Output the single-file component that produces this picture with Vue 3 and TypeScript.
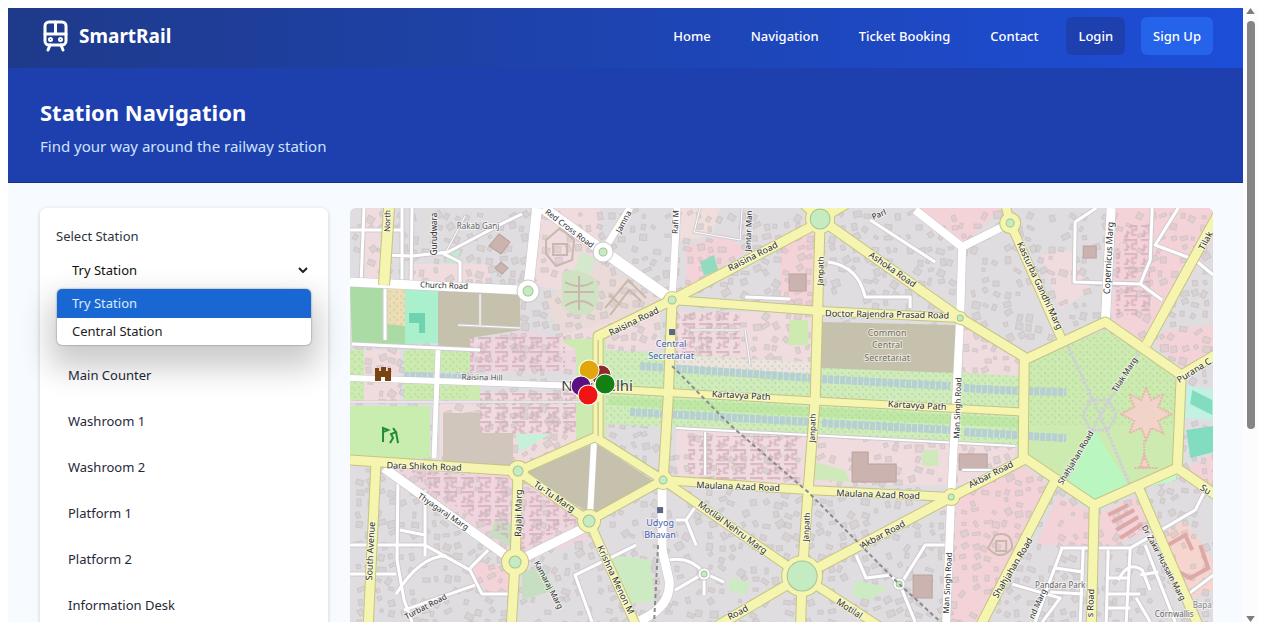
<script setup lang="ts">
import { ref } from 'vue'

interface Shape { d: string; fill: string }
interface Road { d: string; w: number }
interface Label { t: string; x: number; y: number; r: number; s?: number; c?: string }
interface Block { x: number; y: number; w: number; h: number; r: number }

const links = ['Home', 'Navigation', 'Ticket Booking', 'Contact']
const stations = ['Try Station', 'Central Station']
const station = ref('Try Station')
const places = ['Main Counter', 'Washroom 1', 'Washroom 2', 'Platform 1', 'Platform 2', 'Information Desk']

const pink = '#f0dcdf'
const rose = '#f4d3d8'
const grass = '#cdebb0'
const park = '#c5f7c9'
const khaki = '#c6c1ac'

const districts: Shape[] = [
  { d: 'M365 208H380V285H365ZM412 264H490V282H412ZM535 208H600L598 250L560 290L535 285Z', fill: pink },
  { d: 'M440 340H600V372H440ZM440 392H580V470H440ZM350 350H400V404H350Z', fill: pink },
  { d: 'M470 345L520 330L600 345V372H470Z', fill: '#eed6df' },
  { d: 'M600 262L660 300L605 330L560 335L545 300Z', fill: '#eadbd9' },
  { d: 'M686 246L728 234L745 252L686 288Z', fill: rose },
  { d: 'M680 208H720L712 236L680 240Z', fill: '#efdedc' },
  { d: 'M676 312H812V362H676ZM560 335L660 308V350H606L560 350Z', fill: pink },
  { d: 'M780 240L815 230V305H780Z', fill: rose },
  { d: 'M920 208H1002L962 245Z', fill: rose },
  { d: 'M1116 208H1213V240L1148 345L1112 322Z', fill: rose },
  { d: 'M1156 345L1165 330L1213 325V350L1182 368Z', fill: rose },
  { d: 'M1040 255L1070 250L1090 290L1060 310Z', fill: pink },
  { d: 'M962 325L1020 358V385H962ZM676 430H1015V485H676Z', fill: pink },
  { d: 'M412 468L590 478V540L518 560L390 470Z', fill: '#efd6de' },
  { d: 'M478 560L512 570V594H490L472 575Z', fill: rose },
  { d: 'M957 500L1020 464L1052 488L982 622H950Z', fill: rose },
  { d: 'M1058 496L1090 512V545H1036ZM1100 514L1134 496L1155 530L1100 550Z', fill: rose },
  { d: 'M1160 535L1185 520L1213 560V590L1185 600Z', fill: '#f6d5cf' },
  { d: 'M1182 470L1213 455V490Z', fill: rose },
]

const greens: Shape[] = [
  { d: 'M350 285L405 288V345L352 343Z', fill: '#aadba4' },
  { d: 'M405 289L438 291V343L405 344Z', fill: '#aaf0cc' },
  { d: 'M387 288L405 289V326L385 324Z', fill: '#efdcb4' },
  { d: 'M438 291L520 294V330L470 338V350H438Z', fill: khaki },
  { d: 'M350 350H364V400H350ZM404 350H470V372H404ZM404 383H480V400H404Z', fill: grass },
  { d: 'M350 406H430V458H350Z', fill: '#c9edae' },
  { d: 'M443 413H480V433H513V466H443Z', fill: '#d0c6bc' },
  { d: 'M515 434H550L520 452Z', fill: '#c6f0d8' },
  { d: 'M560 340L606 338L606 455L576 440L576 350Z', fill: grass },
  { d: 'M606 350L1020 376V446L606 424Z', fill: '#cfecba' },
  { d: 'M608 396L1020 418V428L608 405Z', fill: '#bfe8a4' },
  { d: 'M676 356L812 362V374L676 366Z', fill: '#eee3e0' },
  { d: 'M821 322L955 325V373L821 368Z', fill: khaki },
  { d: 'M595 443L655 482L594 516L525 473Z', fill: khaki },
  { d: 'M1105 330L1176 377L1174 466L1094 500L1026 455L1028 362Z', fill: grass },
  { d: 'M1095 431L1130 488L1094 502L1066 484Z', fill: '#baf7c0' },
  { d: 'M1130 488L1176 466V480L1136 490Z', fill: park },
  { d: 'M1183 385L1213 390V420L1183 418Z', fill: '#c2f0e2' },
  { d: 'M1192 390L1212 400V415L1190 404ZM1186 430L1213 426V452L1190 458Z', fill: '#82ddc0' },
  { d: 'M562 272Q580 266 596 280Q604 300 590 314Q572 318 562 306Z', fill: '#cfe3c2' },
  { d: 'M580 252L596 258L590 274L574 270Z', fill: '#d4e8cc' },
  { d: 'M700 262L714 255L718 270L704 276Z', fill: '#93dbbe' },
  { d: 'M790 320H808V345H788Z', fill: grass },
  { d: 'M815 462L845 470L850 482L815 480ZM922 450H938V466H922Z', fill: '#cfe9bb' },
  { d: 'M855 580L888 588L870 600L852 596ZM610 555L650 560L655 600L625 605ZM730 578L750 582L745 595L728 590Z', fill: '#cdebc2' },
  { d: 'M495 520L512 524V548L490 535ZM522 570H545L555 590L522 600Z', fill: '#c7dec2' },
  { d: 'M448 254L460 250L456 264L446 262Z', fill: '#c2ead2' },
]

const waters: Road[] = [
  { d: 'M404 376L470 379', w: 9 },
  { d: 'M640 366L812 378M822 379L950 386M964 388L1020 391M1028 391L1066 392', w: 8 },
  { d: 'M630 412L812 422M822 423L950 430M964 432L1018 435M1028 436L1066 438', w: 8 },
]

const minorRoads: Road[] = [
  { d: 'M364 208L361 284M402 208V284M412 208L411 284M350 230H402M384 255L412 256L448 252L505 222L522 214M440 252L460 262V284M385 288V340M352 344L480 350', w: 4 },
  { d: 'M480 294V325M458 325L520 328M465 216L445 254M350 402H580', w: 2 },
  { d: 'M700 208L694 232L740 240L742 208M745 330L750 365M690 330H740', w: 2 },
  { d: 'M870 220L935 262M828 262Q858 266 865 297H910V308M745 297L790 299', w: 4 },
  { d: 'M1096 208L1075 222L1074 282L1140 284L1162 300M1152 208L1150 260L1140 284M1178 208L1155 245L1195 260L1213 275', w: 4 },
  { d: 'M398 474L397 560L404 600L412 622M425 490V556M350 545H425L470 570L482 594H512M350 574H396M396 594Q420 556 446 556M425 535L400 530M404 610L475 585M488 550L470 568', w: 4 },
  { d: 'M636 545L575 575L592 622M676 520L686 520L696 545M686 520L700 500M668 560Q690 556 704 573M704 573L675 590M704 573V595M704 573L724 582', w: 4 },
  { d: 'M950 545H925L900 585L915 622M900 585L890 575L866 578L856 555', w: 4 },
  { d: 'M1060 548H1130L1195 510L1205 490M1062 548L1050 580L1035 622M1083 548L1080 622M1012 584L1060 598L1042 622M1055 568L1083 572M1050 592L1083 594M1108 550L1106 622M1145 545L1175 622M1130 548L1126 622M1106 578H1128M1106 594H1140M1118 580Q1128 560 1142 570L1150 590M1140 575L1158 572M1106 608H1130M1180 600L1213 575M1136 598L1150 622', w: 4 },
  { d: 'M676 428L1015 446M962 470H1015M705 432V475', w: 3 },
]

const whiteRoads: Road[] = [
  { d: 'M350 282L520 290', w: 9 },
  { d: 'M537 208L528 291', w: 10 },
  { d: 'M543 208L603 251L672 300', w: 11 },
  { d: 'M603 251L630 208M677 208L672 300', w: 7 },
  { d: 'M915 210L962 247L1010 223M962 247L960 318L951 497L946 622', w: 8 },
  { d: 'M1111 208L1105 325', w: 9 },
  { d: 'M350 378L580 386', w: 6 },
  { d: 'M384 468L515 562L592 524', w: 9 },
  { d: 'M594 440L590 515', w: 6 },
  { d: 'M662 485V550L669 580Q672 608 636 622', w: 9 },
  { d: 'M438 350L434 458', w: 5 },
]

const mainRoads: Road[] = [
  { d: 'M389 208L384 285', w: 10 },
  { d: 'M598 440V336L672 300L820 222', w: 9 },
  { d: 'M672 300L820 311L960 318', w: 8 },
  { d: 'M672 300L668 400L663 480', w: 9 },
  { d: 'M804 204L820 219L960 318L1024 357', w: 9 },
  { d: 'M820 219L815 400L808 490L802 576L800 640M820 219L846 204', w: 9 },
  { d: 'M608 389L815 401L1022 412', w: 7 },
  { d: 'M1005 204L1010 223L1064 345', w: 8 },
  { d: 'M1024 360L1105 322L1181 375L1177 468L1094 505L1023 457Z', w: 9 },
  { d: 'M1146 345L1220 210M1181 375L1220 352M1177 468L1220 498', w: 9 },
  { d: 'M1023 460L951 497L802 576L710 630', w: 9 },
  { d: 'M1054 482L978 630M1094 508L1091 630M1138 487L1200 630', w: 9 },
  { d: 'M350 460L518 471M376 462L368 630', w: 9 },
  { d: 'M518 471L515 562L511 630', w: 9 },
  { d: 'M518 471L595 437L663 480L589 521Z', w: 8 },
  { d: 'M589 521L638 630', w: 8 },
  { d: 'M663 480L808 490L951 497', w: 8 },
  { d: 'M663 480L802 576L885 630', w: 8 },
]

const circles = [
  { x: 672, y: 300, r: 8, g: 4 }, { x: 820, y: 219, r: 14, g: 10 }, { x: 1010, y: 223, r: 10, g: 4 },
  { x: 960, y: 318, r: 6, g: 3 }, { x: 518, y: 471, r: 10, g: 5 }, { x: 515, y: 562, r: 13, g: 6 },
  { x: 589, y: 521, r: 11, g: 6 }, { x: 663, y: 480, r: 9, g: 4 }, { x: 802, y: 576, r: 20, g: 15 },
  { x: 951, y: 497, r: 8, g: 3 },
]
const whiteCircles = [
  { x: 528, y: 291, r: 11, g: 5 }, { x: 603, y: 252, r: 10, g: 4 }, { x: 704, y: 574, r: 6, g: 3 }, { x: 899, y: 584, r: 6, g: 3 },
]

const labels: Label[] = [
  { t: 'North', x: 388, y: 221, r: -89 }, { t: 'Gurudwara', x: 435, y: 234, r: -90 },
  { t: 'Rakab Ganj', x: 478, y: 227, r: 0, c: '#666' }, { t: 'Church Road', x: 444, y: 286, r: 2 },
  { t: 'Red Cross Road', x: 569, y: 229, r: 37 }, { t: 'Jamna', x: 624, y: 222, r: -62 },
  { t: 'Rafi M', x: 676, y: 222, r: -88 }, { t: 'Jantar Man', x: 749, y: 231, r: -88 },
  { t: 'Raisina Road', x: 753, y: 257, r: -27, s: 9 }, { t: 'Raisina Road', x: 634, y: 322, r: -26, s: 9 },
  { t: 'Raisina Hill', x: 482, y: 378, r: 1, c: '#555' }, { t: 'Janpath', x: 821, y: 271, r: -88 },
  { t: 'Ashoka Road', x: 892, y: 270, r: 35, s: 9 }, { t: 'Parl', x: 879, y: 215, r: -22 },
  { t: 'Doctor Rajendra Prasad Road', x: 887, y: 315, r: 1, s: 9 },
  { t: 'Kasturba Gandhi Marg', x: 1039, y: 286, r: 65, s: 9 }, { t: 'Copernicus Marg', x: 1109, y: 258, r: -87, s: 9 },
  { t: 'Tilak', x: 1206, y: 241, r: -62, s: 9 }, { t: 'Purana C', x: 1194, y: 371, r: -32, s: 9 },
  { t: 'Tilak Marg', x: 1125, y: 375, r: -57 }, { t: 'Kartavya Path', x: 741, y: 396, r: 3, s: 9 },
  { t: 'Kartavya Path', x: 917, y: 406, r: 3, s: 9 }, { t: 'Man Singh Road', x: 958, y: 408, r: -88 },
  { t: 'Janpath', x: 813, y: 428, r: -88 }, { t: 'Shahjahan Road', x: 1076, y: 458, r: -59 },
  { t: 'Dara Shikoh Road', x: 424, y: 467, r: 2, s: 9 }, { t: 'Thyagaraj Marg', x: 443, y: 512, r: 34 },
  { t: 'Tu-Tu Marg', x: 554, y: 497, r: 34, s: 9 }, { t: 'Rajaji Marg', x: 519, y: 513, r: -89, s: 9 },
  { t: 'South Avenue', x: 371, y: 551, r: -87, s: 9 }, { t: 'Turbat Road', x: 426, y: 607, r: -27 },
  { t: 'Krishna Menon M', x: 615, y: 580, r: 65, s: 9 }, { t: 'Kamaraj Marg', x: 548, y: 585, r: 62 },
  { t: 'Maulana Azad Road', x: 738, y: 487, r: 2, s: 9 }, { t: 'Maulana Azad Road', x: 878, y: 495, r: 2, s: 9 },
  { t: 'Motilal Nehru Marg', x: 732, y: 528, r: 36, s: 9 }, { t: 'Akbar Road', x: 883, y: 535, r: -28, s: 9 },
  { t: 'Akbar Road', x: 991, y: 475, r: -27, s: 9 }, { t: 'Janpath', x: 807, y: 527, r: -87 },
  { t: 'Man Singh Road', x: 948, y: 583, r: -87 }, { t: 'Shahjahan Road', x: 1013, y: 568, r: -59, s: 9 },
  { t: 'Dr Zakir Hussain Marg', x: 1163, y: 563, r: 62 }, { t: 'Road', x: 738, y: 613, r: -28, s: 9 },
  { t: 'Motilal', x: 849, y: 609, r: 33, s: 9 }, { t: 's Road', x: 1091, y: 603, r: -88, s: 9 },
  { t: 'Pandara Park', x: 1060, y: 586, r: 0, c: '#666' }, { t: 'Cornwallis', x: 1174, y: 615, r: 0, c: '#666' },
  { t: 'nd Marg', x: 1038, y: 604, r: -65 }, { t: 'Bapa', x: 1202, y: 606, r: 0, c: '#888' }, { t: 'Su', x: 1205, y: 490, r: 32, s: 9 },
  { t: 'Common', x: 887, y: 334, r: 0, s: 9, c: '#77725f' }, { t: 'Central', x: 887, y: 346, r: 0, s: 9, c: '#77725f' },
  { t: 'Secretariat', x: 887, y: 359, r: 0, s: 9, c: '#77725f' },
  { t: 'Central', x: 671, y: 345, r: 0, s: 9, c: '#4560b0' }, { t: 'Secretariat', x: 671, y: 357, r: 0, s: 9, c: '#4560b0' },
  { t: 'Udyog', x: 660, y: 524, r: 0, s: 9, c: '#4560b0' }, { t: 'Bhavan', x: 660, y: 536, r: 0, s: 9, c: '#4560b0' },
]

const pins = [
  { x: 601, y: 375, c: '#8f2a2a' }, { x: 589, y: 370, c: '#e0a60c' }, { x: 581, y: 386, c: '#5b1080' },
  { x: 605, y: 384, c: '#128012' }, { x: 588, y: 395, c: '#f01414' },
]

// Small building footprints scattered with a repeatable generator.
function footprints(): Block[] {
  let seed = 41
  const rnd = () => (seed = (seed * 16807) % 2147483647) / 2147483647
  const out: Block[] = []
  for (let y = 212; y < 636; y += 11) {
    for (let x = 354; x < 1213; x += 11) {
      if (rnd() < 0.3) continue
      out.push({
        x: Math.round(x + rnd() * 4), y: Math.round(y + rnd() * 4),
        w: Math.round(3 + rnd() * 5), h: Math.round(3 + rnd() * 4), r: Math.round(rnd() * 70 - 35),
      })
    }
  }
  return out
}
const blocks = footprints()
</script>

<template>
  <div class="frame">
    <div class="page">
      <header class="topbar">
        <a class="brand" href="#">
          <svg class="brand-icon" viewBox="0 0 26 32" aria-hidden="true">
            <rect x="2" y="2" width="21" height="23" rx="4" />
            <path d="M2 14H23M12.500 2V14M7 25L5 30M18 25L20 30" />
            <circle cx="7.500" cy="19.500" r="1" /><circle cx="17.500" cy="19.500" r="1" />
          </svg>
          <span>SmartRail</span>
        </a>
        <nav class="nav">
          <a v-for="l in links" :key="l" href="#">{{ l }}</a>
          <a class="login" href="#">Login</a>
          <a class="signup" href="#">Sign Up</a>
        </nav>
      </header>

      <section class="hero">
        <h1>Station Navigation</h1>
        <p>Find your way around the railway station</p>
      </section>

      <main class="content">
        <aside class="card">
          <label for="station">Select Station</label>
          <div class="picker">
            <select id="station" v-model="station">
              <option v-for="s in stations" :key="s">{{ s }}</option>
            </select>
            <svg class="chevron" viewBox="0 0 10 6" aria-hidden="true"><path d="M1 1L5 5L9 1" /></svg>
            <ul class="options" role="listbox" aria-label="Stations">
              <li v-for="s in stations" :key="s" role="option" :aria-selected="s === station" :class="{ active: s === station }" @click="station = s">{{ s }}</li>
            </ul>
          </div>
          <div class="places">
            <button v-for="p in places" :key="p" type="button">{{ p }}</button>
          </div>
        </aside>

        <div class="map">
          <svg viewBox="350 208 863 422" role="img" aria-label="Map of New Delhi">
            <defs>
              <pattern id="trees" width="7" height="7" patternUnits="userSpaceOnUse">
                <circle cx="2" cy="2" r="1" /><circle cx="5" cy="5" r="1" />
              </pattern>
              <pattern id="plots" width="17" height="14" patternUnits="userSpaceOnUse">
                <path d="M2 2H14V6H10V11H14M5 6V12H2M6 9H8" />
              </pattern>
            </defs>
            <rect class="ground" x="350" y="208" width="863" height="430" />
            <path v-for="(s, i) in districts" :key="'d' + i" :d="s.d" :fill="s.fill" />
            <rect v-for="(b, i) in blocks" :key="'b' + i" class="block" :x="b.x" :y="b.y" :width="b.w" :height="b.h" :transform="`rotate(${b.r} ${b.x} ${b.y})`" />
            <path v-for="(s, i) in greens" :key="'g' + i" :d="s.d" :fill="s.fill" />
            <path class="plots" d="M470 336H565V371H470ZM480 393H576V434H480ZM410 470L510 478V540L430 490ZM676 312H740V356H676ZM688 436H800V480H688ZM1130 225H1150V315H1116V250ZM525 485L580 520L520 550Z" />
            <path class="trees" d="M350 350H364V400H350ZM404 350H470V400H404ZM606 350L1020 376V446L606 424ZM1105 330L1176 377L1174 425L1026 425L1028 362ZM385 290H405V325H385Z" />
            <path v-for="(r, i) in waters" :key="'w' + i" class="water" :d="r.d" :stroke-width="r.w" />

            <path class="drive" d="M1067 345L1100 415L1066 480M1140 350L1100 415L1131 488M1090 400H1108L1116 415L1108 430H1090L1083 415Z" />
            <path class="garden" d="M1146 388L1151 400L1163 394L1158 407L1171 414L1158 421L1163 433L1151 428L1146 440L1141 428L1129 433L1134 421L1121 414L1134 407L1129 394L1141 400Z" />
            <path class="garden" d="M1144 440V460M1134 468H1158M1140 467L1144 454L1149 467Z" />
            <path class="pool" d="M409 313H425V333H419V323H409Z" />
            <path class="ornament" d="M605 308L628 280L646 298M610 315L629 290L641 301M610 295L620 305M564 292H594M579 276V310M565 282Q580 290 593 282M565 306Q580 296 593 306" />
            <path class="ornament" d="M546 240L560 228L574 240L572 260L556 266L546 254ZM553 244H567V255H553ZM995 535Q1012 530 1012 548Q1000 562 988 548ZM996 541H1006V551H996Z" />
            <path class="building" d="M499 234L510 242L501 254L489 246ZM501 262L508 268L502 274L495 268ZM852 452H868V464H896V482H852ZM959 454H987V470H959ZM1083 246H1096V258H1083ZM789 274H806V291H789ZM913 575H932V598H913Z" />
            <path class="brick" d="M1108 515L1128 505M1112 522L1134 510M1116 530L1138 517M1120 538L1142 524M1168 545L1185 535L1192 550M1175 570L1190 578L1208 568L1200 545" />

            <path v-for="(r, i) in minorRoads" :key="'mc' + i" class="minor-case" :d="r.d" :stroke-width="r.w + 1" />
            <path v-for="(r, i) in minorRoads" :key="'m' + i" class="minor" :d="r.d" :stroke-width="r.w - 1" />
            <path v-for="(r, i) in whiteRoads" :key="'wc' + i" class="white-case" :d="r.d" :stroke-width="r.w + 1" />
            <path v-for="(r, i) in whiteRoads" :key="'wr' + i" class="minor" :d="r.d" :stroke-width="r.w" />
            <path v-for="(r, i) in mainRoads" :key="'yc' + i" class="main-case" :d="r.d" :stroke-width="r.w + 2" />
            <circle v-for="(c, i) in circles" :key="'cc' + i" class="main-ring" :cx="c.x" :cy="c.y" :r="c.r + 1" />
            <path v-for="(r, i) in mainRoads" :key="'y' + i" class="main-fill" :d="r.d" :stroke-width="r.w" />
            <path class="median" d="M598 340V366M598 402V436" />
            <circle v-for="(c, i) in circles" :key="'c' + i" class="main-disc" :cx="c.x" :cy="c.y" :r="c.r" />
            <circle v-for="(c, i) in circles" :key="'ci' + i" class="isle" :cx="c.x" :cy="c.y" :r="c.g" />
            <circle v-for="(c, i) in whiteCircles" :key="'k' + i" class="white-disc" :cx="c.x" :cy="c.y" :r="c.r" />
            <circle v-for="(c, i) in whiteCircles" :key="'ki' + i" class="isle" :cx="c.x" :cy="c.y" :r="c.g" />
            <path class="rail" d="M672 366L730 425L808 492L899 584L945 626M658 545L654 622" />

            <path class="palace" d="M375 368H379V371H381V367H386V371H388V368H391V381H385V377H381V381H375Z" />
            <path class="golf" d="M383 442V428L388 430L383 432M393 428L396 432L391 434L393 438L390 443M396 432L398 443" />
            <rect class="metro" x="669" y="329" width="6" height="6" /><rect class="metro" x="657" y="507" width="6" height="6" />

            <text v-for="(l, i) in labels" :key="'t' + i" :x="l.x" :y="l.y" :font-size="l.s ?? 8" :fill="l.c ?? '#2b2b2b'" :transform="`rotate(${l.r} ${l.x} ${l.y})`">{{ l.t }}</text>
            <text class="city" x="597" y="387">New Delhi</text>
            <circle v-for="p in pins" :key="p.c" class="pin" :cx="p.x" :cy="p.y" r="10" :fill="p.c" />
          </svg>
        </div>
      </main>
    </div>

    <div class="scrollbar" aria-hidden="true">
      <svg viewBox="0 0 10 7"><path d="M5 0L10 7H0Z" /></svg>
      <div class="track"><div class="thumb"></div></div>
      <svg viewBox="0 0 10 7"><path d="M0 0H10L5 7Z" /></svg>
    </div>
  </div>
</template>

<style>
body { background: #fff; }
</style>

<style scoped>
* { box-sizing: border-box; }
.frame {
  display: flex;
  height: 100vh;
  padding: 8px 17px 17px 8px;
  font-family: "Noto Sans", "Open Sans", sans-serif;
  font-size: 13px;
  color: #2d3440;
}
.page { flex: 1; min-width: 0; overflow: hidden; background: #f7fbff; }
.topbar {
  display: flex;
  align-items: center;
  justify-content: space-between;
  height: 60px;
  padding: 0 30px 4px 32px;
  background: linear-gradient(90deg, #1e3a8a, #1d4ed8);
}
.brand { display: flex; align-items: center; gap: 10px; color: #fff; font-size: 19px; font-weight: 700; text-decoration: none; }
.brand-icon { width: 29px; height: 34px; padding-left: 3px; fill: none; stroke: #fff; stroke-width: 3; stroke-linecap: round; }
.nav { display: flex; gap: 16px; }
.nav a { padding: 0 12px; border-radius: 6px; color: #fff; font-weight: 500; line-height: 38px; text-decoration: none; }
.nav .login { background: #1e40af; }
.nav .signup { background: #2563eb; }
.hero { height: 115px; padding: 28px 32px 24px; background: #1e40af; border-bottom: 1px solid #1c3478; color: #fff; }
.hero h1 { margin: 0 0 6px; font-size: 22px; line-height: 32px; }
.hero p { margin: 0; color: #cfe2ff; font-size: 15px; line-height: 24px; }
.content { display: grid; grid-template-columns: 1fr 3fr; gap: 22px; padding: 25px 30px 0 32px; }
.card { padding: 18px 16px; border-radius: 6px; background: #fff; box-shadow: 0 1px 4px rgba(0, 0, 0, .18); }
.card label { display: block; line-height: 20px; }
.picker { position: relative; margin-top: 8px; }
.picker select { display: block; width: 100%; height: 32px; padding: 0 16px; border: 0; border-radius: 4px; background: #fff; color: #111; font: inherit; appearance: none; outline: none; }
.chevron { position: absolute; top: 13px; right: 4px; width: 10px; height: 6px; fill: none; stroke: #222; stroke-width: 2; }
.options { position: absolute; z-index: 2; top: 35px; left: 1px; right: 1px; margin: 0; padding: 0; overflow: hidden; border-radius: 5px; background: #fff; color: #222; list-style: none; box-shadow: 0 0 2px rgba(0, 0, 0, .5), 0 16px 30px 8px rgba(0, 0, 0, .2); }
.options li { padding: 0 15px; line-height: 27px; }
.options .active { background: #1967d2; color: #dcebff; line-height: 29px; }
.places { display: grid; gap: 8px; margin-top: 70px; }
.places button { height: 38px; padding: 0 12px; border: 0; background: none; color: #1f2937; font: inherit; text-align: left; }
.map { overflow: hidden; border-radius: 6px 6px 0 0; background: #dedcdf; }
.map svg { display: block; width: 100%; }
.ground { fill: #dfdde0; }
.block { fill: #d3cbcb; stroke: #c3babb; stroke-width: 1; opacity: .6; }
.plots { fill: url(#plots); }
#plots path { fill: none; stroke: #d3aebb; stroke-width: 2; opacity: .8; }
.trees { fill: url(#trees); }
#trees circle { fill: #add19e; opacity: .8; }
.water { fill: none; stroke: #b5cfd5; stroke-dasharray: 5 1; }
.drive { fill: none; stroke: #cfcfd6; stroke-width: 3; stroke-dasharray: 3 1; }
.garden { fill: #f1d3c9; stroke: #e3b9aa; stroke-width: 2; stroke-dasharray: 2 1; }
.pool { fill: #6fd3ae; }
.ornament { fill: none; stroke: #c8b8ac; stroke-width: 2; }
.building { fill: #cbb4b0; stroke: #b9a19e; stroke-width: 1; }
.brick { fill: none; stroke: #dda8a8; stroke-width: 4; }
.minor-case, .white-case, .minor, .main-case, .main-fill { fill: none; stroke-linejoin: round; }
.minor-case { stroke: #cfcbd0; }
.white-case { stroke: #c8c4c8; }
.minor { stroke: #fff; }
.main-case { stroke: #c5c483; }
.main-fill { stroke: #f5f5b0; }
.main-ring { fill: #c5c483; }
.main-disc { fill: #f5f5b0; }
.white-disc { fill: #fff; stroke: #ccc; stroke-width: 1; }
.isle { fill: #c4ecc0; stroke: #a4c296; stroke-width: 1; }
.median { stroke: #b9b27a; stroke-width: 1; fill: none; }
.rail { fill: none; stroke: #8a8a90; stroke-width: 2; stroke-dasharray: 4 3; }
.palace { fill: #7a4312; }
.golf { fill: none; stroke: #238a3a; stroke-width: 2; }
.metro { fill: #5a6688; }
.map text { text-anchor: middle; dominant-baseline: middle; paint-order: stroke; stroke: rgba(255, 255, 255, .55); stroke-width: 2; }
.map .city { font-size: 15px; fill: #444; }
.pin { stroke: #fff; stroke-width: 1; }
.scrollbar { display: flex; flex-direction: column; align-items: center; width: 15px; background: #fcfcfc; }
.scrollbar svg { width: 9px; height: 6px; fill: #7d7d7d; }
.track { flex: 1; padding: 7px 0 4px; }
.thumb { width: 8px; height: 69%; border-radius: 4px; background: #858585; }
</style>
